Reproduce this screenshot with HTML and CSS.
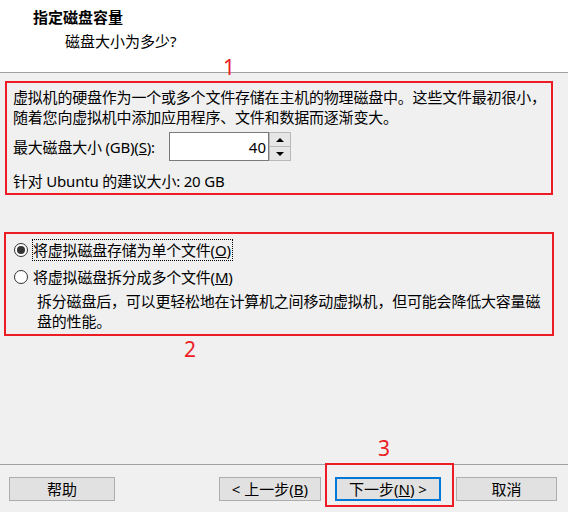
FILE: index.html
```html
<!DOCTYPE html>
<html>
	<head>
		<meta charset="UTF-8">
		<title>指定磁盘容量</title>
		<link rel="stylesheet" href="styles.css">
	</head>
	<body>
		<div class="page">
			<div class="header">
				<div class="title">指定磁盘容量</div>
				<div class="subtitle">磁盘大小为多少?</div>
			</div>

			<div class="mark box1">
				<span class="num num1">1</span>
				<p class="desc">虚拟机的硬盘作为一个或多个文件存储在主机的物理磁盘中。这些文件最初很小，随着您向虚拟机中添加应用程序、文件和数据而逐渐变大。</p>
				<div class="size-row">
					<label for="size">最大磁盘大小 (GB)(<u>S</u>):</label>
					<input type="text" id="size" class="size-input" value="40" />
					<div class="spin">
						<span class="spin-btn"><i class="tri up"></i></span>
						<span class="spin-btn"><i class="tri down"></i></span>
					</div>
				</div>
				<div class="hint">针对 Ubuntu 的建议大小: 20 GB</div>
			</div>

			<div class="mark box2">
				<span class="num num2">2</span>
				<div class="radio-row">
					<input type="radio" name="store" id="single" class="radio" checked />
					<label for="single" class="focus">将虚拟磁盘存储为单个文件(<u>O</u>)</label>
				</div>
				<div class="radio-row second">
					<input type="radio" name="store" id="multi" class="radio" />
					<label for="multi">将虚拟磁盘拆分成多个文件(<u>M</u>)</label>
				</div>
				<p class="split-note">拆分磁盘后，可以更轻松地在计算机之间移动虚拟机，但可能会降低大容量磁盘的性能。</p>
			</div>

			<div class="footer">
				<button class="btn btn-help">帮助</button>
				<button class="btn btn-back">&lt; 上一步(<u>B</u>)</button>
				<span class="next-wrap">
					<span class="num num3">3</span>
					<button class="btn btn-next">下一步(<u>N</u>) &gt;</button>
				</span>
				<button class="btn btn-cancel">取消</button>
			</div>
		</div>
	</body>
</html>
```

FILE: styles.css
```css
body{
	margin: 0;
	background-color: #f0f0f0;
	font: 15px/20px "Noto Sans", "Noto Sans CJK SC", sans-serif;
	color: #000;
}
.page{
	display: flex;
	flex-direction: column;
	width: 568px;
	height: 512px;
}
.header{
	background-color: #fff;
	border-bottom: 1px solid #a0a0a0;
	box-sizing: border-box;
	height: 73px;
}
.title{
	margin: 7px 0 0 33px;
	font-weight: bold;
}
.subtitle{
	margin: 4px 0 0 65px;
}
.mark{
	position: relative;
	border: 2px solid #ed1c24;
	box-sizing: border-box;
	letter-spacing: -0.2px;
}
.num{
	position: absolute;
	color: #ed1c24;
	font: 21px/22px "Noto Sans", sans-serif;
	letter-spacing: 0;
}
.box1{
	margin: 8px 0 0 5px;
	width: 548px;
	padding: 4px 0 2px 6px;
}
.num1{
	left: 216px;
	top: -27px;
}
.desc{
	margin: 0;
}
.size-row{
	display: flex;
	align-items: center;
	margin-top: 5px;
	height: 29px;
}
.size-row label{
	width: 156px;
}
.size-input{
	width: 100px;
	height: 29px;
	box-sizing: border-box;
	border: 1px solid #7a7a7a;
	background-color: #fff;
	text-align: right;
	padding: 0 2px 0 0;
	font: inherit;
	outline: none;
}
.spin{
	display: flex;
	flex-direction: column;
	width: 22px;
	height: 29px;
	box-sizing: border-box;
	border: 1px solid #b9b9b9;
	gap: 1px;
	background-color: #b9b9b9;
}
.spin-btn{
	flex: 1;
	display: flex;
	align-items: center;
	justify-content: center;
	background-color: #e6e6e6;
}
.tri{
	width: 0;
	height: 0;
	border-left: 4px solid transparent;
	border-right: 4px solid transparent;
}
.tri.up{
	border-bottom: 4px solid #000;
}
.tri.down{
	border-top: 4px solid #000;
}
.hint{
	margin-top: 10px;
}
.box2{
	margin: 37px 0 0 4px;
	width: 550px;
	padding: 6px 0 3px 6px;
}
.num2{
	left: 178px;
	bottom: -26px;
}
.radio-row{
	display: flex;
	align-items: center;
	height: 20px;
}
.radio-row.second{
	margin-top: 7px;
}
.radio{
	appearance: none;
	-webkit-appearance: none;
	margin: 0 5px 0 2px;
	width: 14px;
	height: 14px;
	border: 1px solid #333;
	border-radius: 50%;
	background-color: #fff;
	box-sizing: border-box;
	position: relative;
}
.radio:checked::after{
	content: "";
	position: absolute;
	left: 2px;
	top: 2px;
	width: 8px;
	height: 8px;
	border-radius: 50%;
	background-color: #333;
}
.focus{
	outline: 1px dotted #000;
	outline-offset: 0;
	padding-right: 1px;
}
.split-note{
	margin: 4px 0 0 25px;
}
.footer{
	margin-top: auto;
	height: 48px;
	box-sizing: border-box;
	border-top: 1px solid #a0a0a0;
	display: flex;
	align-items: flex-start;
	padding: 12px 0 0 9px;
}
.btn{
	height: 24px;
	box-sizing: border-box;
	border: 1px solid #adadad;
	background-color: #e1e1e1;
	font: inherit;
	line-height: 20px;
	padding: 0;
	color: #000;
}
.btn-help{
	width: 106px;
}
.btn-back{
	width: 102px;
	margin-left: 104px;
}
.next-wrap{
	position: relative;
	margin-left: 14px;
	display: flex;
}
.next-wrap::before{
	content: "";
	position: absolute;
	left: -10px;
	right: -13px;
	top: -14px;
	bottom: -6px;
	border: 2px solid #ed1c24;
}
.num3{
	left: 43px;
	top: -40px;
}
.btn-next{
	width: 106px;
	border: 2px solid #0078d7;
}
.btn-cancel{
	width: 101px;
	margin-left: 15px;
}
```
